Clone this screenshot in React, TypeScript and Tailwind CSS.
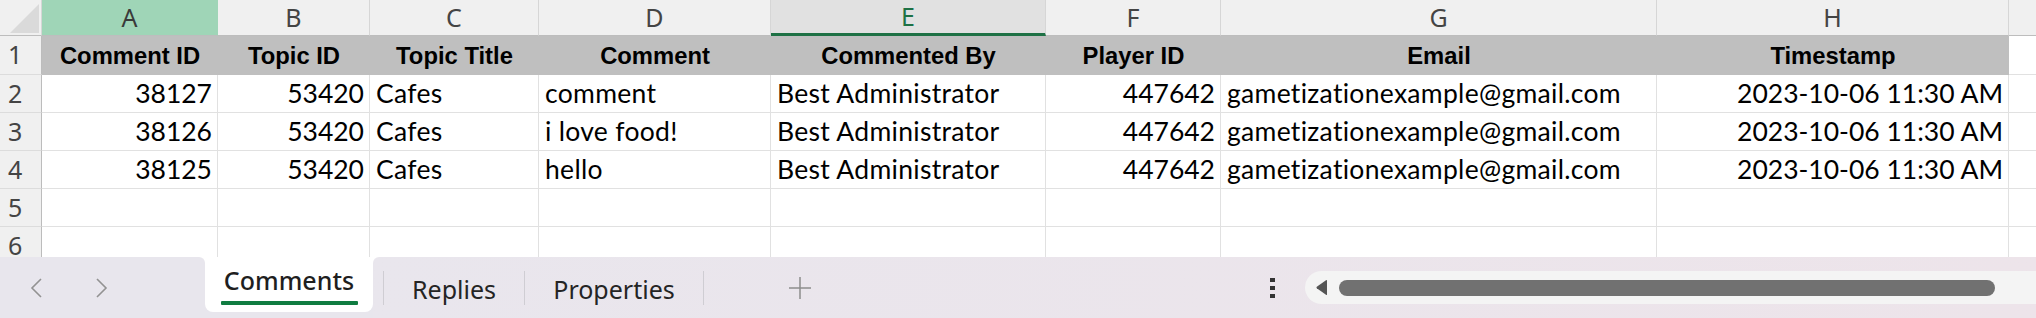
import React from 'react';

const cols = [
  { key: 'A', w: 'w-[176px]' },
  { key: 'B', w: 'w-[152px]' },
  { key: 'C', w: 'w-[169px]' },
  { key: 'D', w: 'w-[232px]' },
  { key: 'E', w: 'w-[275px]' },
  { key: 'F', w: 'w-[175px]' },
  { key: 'G', w: 'w-[436px]' },
  { key: 'H', w: 'w-[352px]' },
];

const headers = ['Comment ID', 'Topic ID', 'Topic Title', 'Comment', 'Commented By', 'Player ID', 'Email', 'Timestamp'];

// true = numeric (right aligned)
const alignRight = [true, true, false, false, false, true, false, true];

const rows = [
  ['38127', '53420', 'Cafes', 'comment', 'Best Administrator', '447642', 'gametizationexample@gmail.com', '2023-10-06 11:30 AM'],
  ['38126', '53420', 'Cafes', 'i love food!', 'Best Administrator', '447642', 'gametizationexample@gmail.com', '2023-10-06 11:30 AM'],
  ['38125', '53420', 'Cafes', 'hello', 'Best Administrator', '447642', 'gametizationexample@gmail.com', '2023-10-06 11:30 AM'],
];

const uiFont = "font-['Noto_Sans',sans-serif]";
const cellFont = "font-['Lato',sans-serif]";

function RowNum({ n, h }: { n: number; h: string }) {
  return (
    <div
      className={`w-[42px] shrink-0 ${h} bg-[#f0f0f0] border-r border-r-[#bcbcbc] border-b border-b-[#dcdcdc] flex items-center pl-[8px] text-[25px] text-[#444] ${uiFont}`}
    >
      {n}
    </div>
  );
}

export default function App() {
  return (
    <div className="w-[2036px] h-[318px] bg-white overflow-hidden flex flex-col">
      {/* Grid */}
      <div className="h-[257px] overflow-hidden flex flex-col">
        {/* column letters */}
        <div className="flex h-[36px] shrink-0">
          <div className="w-[42px] shrink-0 bg-[#f0f0f0] border-r border-r-[#d6d6d6] border-b border-b-[#bdbdbd] relative">
            <svg width="42" height="36" className="absolute inset-0">
              <polygon points="10,33 39,33 39,4" fill="#dadada" />
            </svg>
          </div>
          {cols.map((c) => {
            const sel = c.key === 'A';
            const act = c.key === 'E';
            return (
              <div
                key={c.key}
                className={`${c.w} shrink-0 flex items-center justify-center text-[25px] ${uiFont} border-r ${
                  sel
                    ? 'bg-[#9fd5b7] border-r-[#9fd5b7] border-b border-b-[#bdbdbd] text-[#3a3a3a]'
                    : act
                    ? 'bg-[#e1e1e1] border-r-[#d6d6d6] border-b-[3px] border-b-[#1e7145] text-[#1e7145]'
                    : 'bg-[#f0f0f0] border-r-[#d6d6d6] border-b border-b-[#bdbdbd] text-[#444]'
                }`}
              >
                {c.key}
              </div>
            );
          })}
          <div className="flex-1 bg-[#f0f0f0] border-b border-b-[#bdbdbd]" />
        </div>

        {/* row 1: headers */}
        <div className="flex h-[39px] shrink-0">
          <RowNum n={1} h="h-[39px]" />
          {cols.map((c, i) => (
            <div
              key={c.key}
              className={`${c.w} shrink-0 bg-[#bfbfbf] flex items-center justify-center text-[23.8px] font-bold text-black font-['Liberation_Sans',Arial,sans-serif]`}
            >
              {headers[i]}
            </div>
          ))}
          <div className="flex-1 border-b border-b-[#e1e1e1]" />
        </div>

        {/* data rows */}
        {[0, 1, 2, 3, 4].map((r) => (
          <div key={r} className="flex h-[38px] shrink-0">
            <RowNum n={r + 2} h="h-[38px]" />
            {cols.map((c, i) => {
              const v = rows[r]?.[i] ?? '';
              return (
                <div
                  key={c.key}
                  className={`${c.w} shrink-0 border-r border-b border-[#e1e1e1] flex items-center whitespace-nowrap text-[26.5px] text-black ${cellFont} ${
                    alignRight[i] ? 'justify-end pr-[5px]' : 'pl-[6px] tracking-[0.3px]'
                  }`}
                >
                  {v}
                </div>
              );
            })}
            <div className="flex-1 border-b border-[#e1e1e1]" />
          </div>
        ))}
      </div>

      {/* Sheet tab bar */}
      <div className="h-[61px] flex bg-white">
        <div className="w-[205px] shrink-0 bg-[#e8e6ed] rounded-tr-[6px] flex items-center">
          <svg width="12" height="20" viewBox="0 0 12 20" className="ml-[30px]">
            <polyline points="11,1 2,10 11,19" fill="none" stroke="#929292" strokeWidth="1.6" />
          </svg>
          <svg width="12" height="20" viewBox="0 0 12 20" className="ml-[54px]">
            <polyline points="1,1 10,10 1,19" fill="none" stroke="#929292" strokeWidth="1.6" />
          </svg>
        </div>

        <div className="w-[168px] shrink-0 bg-[#e8e6ed]">
          <div className="h-[55px] bg-white rounded-b-[8px] flex flex-col items-center pt-[8px]">
            <span className={`text-[25px] leading-[30px] font-medium text-[#1f1f1f] ${uiFont}`}>Comments</span>
            <div className="w-[137px] h-[4px] mt-[6px] bg-[#107c41] rounded-[1px]" />
          </div>
        </div>

        <div className="flex-1 bg-gradient-to-r from-[#e9e6ed] to-[#ede4ea] rounded-tl-[6px] flex items-center">
          <div className="ml-[10px] w-px h-[34px] bg-[#cfcdd3]" />
          <div className={`w-[140px] text-center text-[25px] pt-[4px] text-[#242424] ${uiFont}`}>Replies</div>
          <div className="w-px h-[34px] bg-[#cfcdd3]" />
          <div className={`w-[178px] text-center text-[25px] pt-[4px] text-[#242424] ${uiFont}`}>Properties</div>
          <div className="w-px h-[34px] bg-[#cfcdd3]" />
          <svg width="24" height="24" viewBox="0 0 24 24" className="ml-[84px]">
            <line x1="12" y1="1" x2="12" y2="23" stroke="#8c8c8c" strokeWidth="1.5" />
            <line x1="1" y1="12" x2="23" y2="12" stroke="#8c8c8c" strokeWidth="1.5" />
          </svg>
          <div className="ml-[458px] flex flex-col gap-[4px]">
            <div className="w-[5px] h-[4px] bg-[#333]" />
            <div className="w-[5px] h-[4px] bg-[#333]" />
            <div className="w-[5px] h-[4px] bg-[#333]" />
          </div>
          <div className="ml-[30px] flex-1 h-[33px] bg-[#f4f4f4] rounded-l-full flex items-center">
            <svg width="13" height="17" viewBox="0 0 13 17" className="ml-[10px]">
              <path d="M12 1.5 L12 15.5 Q12 16.5 11 15.8 L1.8 9.2 Q1 8.5 1.8 7.8 L11 1.2 Q12 0.5 12 1.5 Z" fill="#555" />
            </svg>
            <div className="ml-[11px] w-[656px] h-[16px] bg-[#717171] rounded-[8px]" />
          </div>
        </div>
      </div>
    </div>
  );
}
